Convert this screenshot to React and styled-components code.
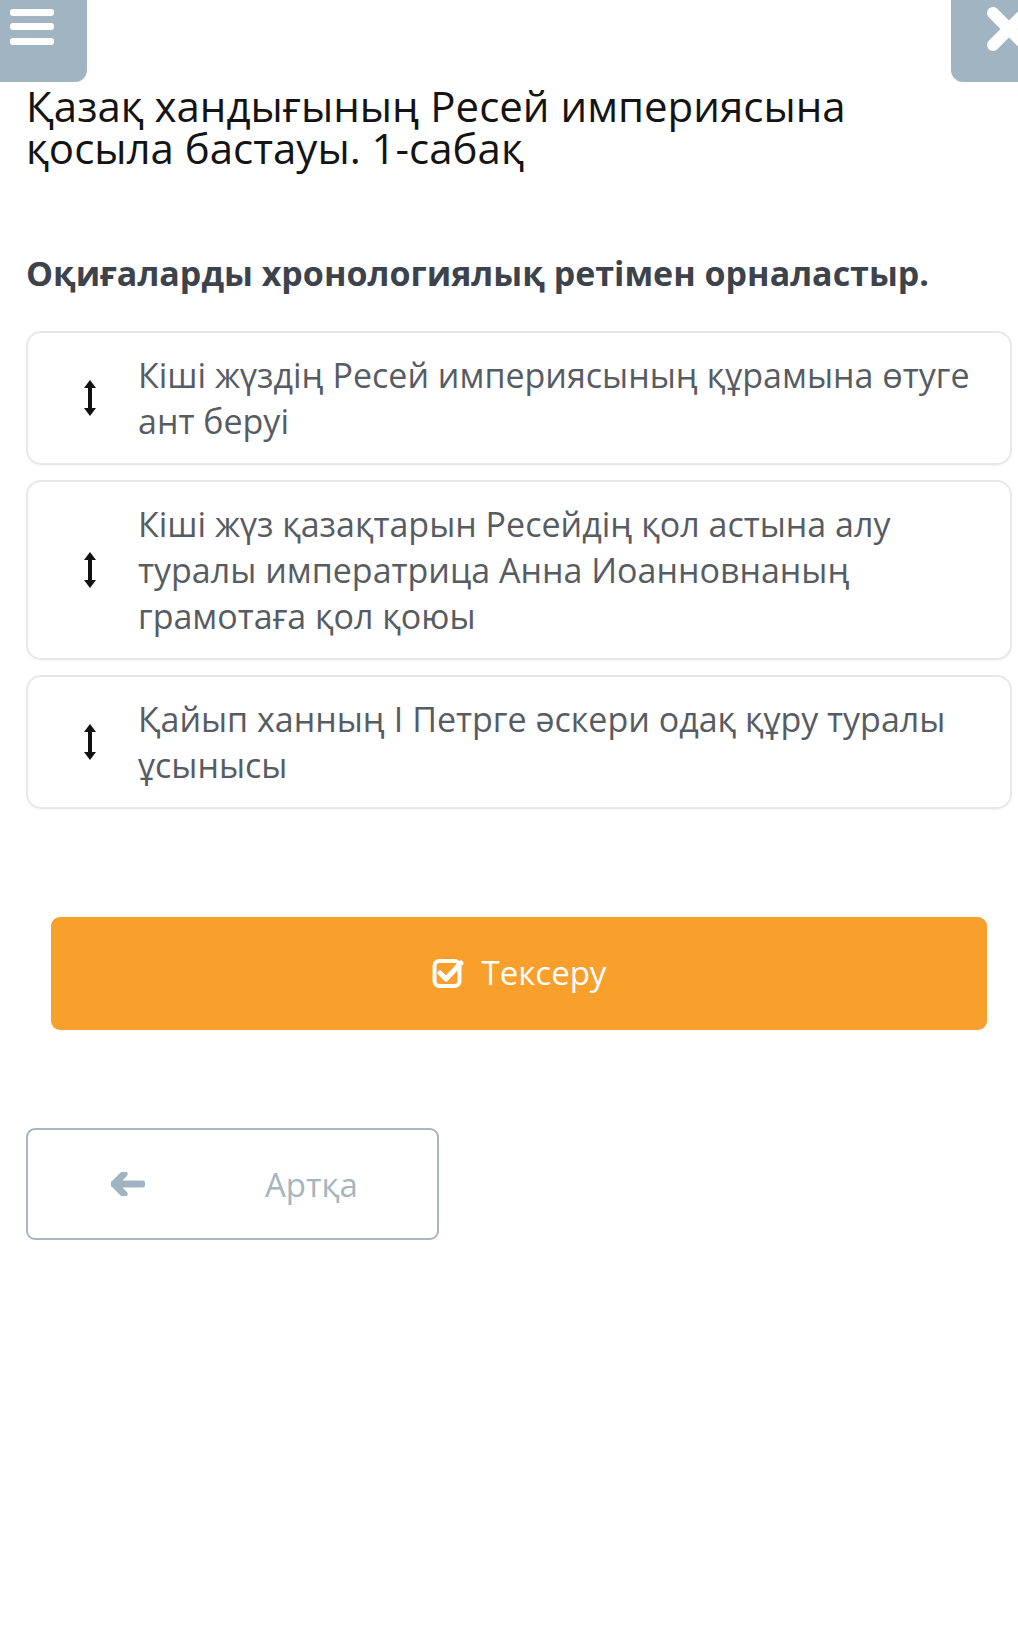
import React from 'react';
import styled, { createGlobalStyle } from 'styled-components';

const GlobalStyle = createGlobalStyle`
    html, body {
        margin: 0;
        padding: 0;
        background: #ffffff;
        overflow-x: hidden;
    }
    body {
        font-family: "Open Sans", "Noto Sans", sans-serif;
    }
`;

const Page = styled.div`
    width: 1018px;
    min-height: 1635px;
    overflow: hidden;
`;

const TopBar = styled.div`
    display: flex;
    justify-content: space-between;
    height: 82px;
`;

const CornerBtn = styled.button`
    /* верхние серые кнопки */
    width: 87px;
    height: 82px;
    border: none;
    padding: 0;
    background: #a0b4c2;
    display: flex;
    align-items: flex-start;
    border-radius: ${props => props.right ? "0 0 0 12px" : "0 0 12px 0"};
    margin-right: ${props => props.right ? "-20px" : "0"};
    flex-shrink: 0;
`;

const Content = styled.div`
    padding: 3px 6px 0 26px;
`;

const Title = styled.h1`
    margin: 0;
    max-width: 900px;
    font-size: 42px;
    font-weight: 400;
    line-height: 42px;
    color: #141414;
`;

const Question = styled.h2`
    margin: 84px 0 0;
    font-size: 34px;
    font-weight: 700;
    line-height: 40px;
    color: #3d434d;
`;

const SortList = styled.ul`
    list-style: none;
    margin: 38px 0 0;
    padding: 0;
    display: flex;
    flex-direction: column;
    gap: 15px;
`;

const SortItem = styled.li`
    display: flex;
    align-items: center;
    border: 2px solid #e6e8ea;
    border-radius: 15px;
    padding: 19px 20px 19px 0;
    box-shadow: 0 1px 2px rgba(0, 0, 0, 0.04);
`;

const Handle = styled.div`
    width: 110px;
    flex-shrink: 0;
    display: flex;
    justify-content: center;
    padding-left: 14px;
    box-sizing: border-box;
`;

const ItemText = styled.p`
    margin: 0;
    font-size: 34px;
    line-height: 46px;
    color: #575c63;
`;

const CheckBtn = styled.button`
    display: flex;
    align-items: center;
    justify-content: center;
    gap: 18px;
    width: 936px;
    height: 113px;
    margin: 108px 0 0 25px;
    border: none;
    border-radius: 9px;
    background: #f99f2c;
    color: #ffffff;
    font-family: "Open Sans", sans-serif;
    font-size: 33px;
    padding: 0 0 2px;
`;

const BackBtn = styled.button`
    display: flex;
    align-items: center;
    width: 413px;
    height: 112px;
    margin-top: 98px;
    border: 2px solid #a9b6be;
    border-radius: 9px;
    background: #ffffff;
    color: #a6b5be;
    font-family: "Open Sans", sans-serif;
    font-size: 33px;
    padding: 0 0 0 83px;
    box-sizing: border-box;
    gap: 120px;
`;

const MenuIcon = () => (
    <svg width="87" height="82" viewBox="0 0 87 82">
        <rect x="10" y="9" width="44" height="7" rx="3" fill="#fff" />
        <rect x="10" y="23" width="44" height="7" rx="3" fill="#fff" />
        <rect x="10" y="38" width="44" height="7" rx="3" fill="#fff" />
    </svg>
);

const CloseIcon = () => (
    <svg width="87" height="82" viewBox="0 0 87 82">
        <path d="M42 13 L74 45 M74 13 L42 45" stroke="#fff" strokeWidth="12" strokeLinecap="round" />
    </svg>
);

const ArrowsV = () => (
    <svg width="12" height="36" viewBox="0 0 12 36">
        <path d="M6 0 L12 8 L8 8 L8 28 L12 28 L6 36 L0 28 L4 28 L4 8 L0 8 Z" fill="#111" />
    </svg>
);

const CheckSquare = () => (
    <svg width="32" height="30" viewBox="0 0 32 30">
        <rect x="2.5" y="3" width="25" height="25" rx="5" fill="none" stroke="#fff" strokeWidth="4" />
        <path d="M8 15 L14 21 L29 5" fill="none" stroke="#fff" strokeWidth="5" strokeLinecap="round" strokeLinejoin="round" />
    </svg>
);

const ArrowLeft = () => (
    <svg width="34" height="24" viewBox="0 0 34 24">
        <path d="M3 12 L13 2 M3 12 L13 22 M3 12 L31 12" fill="none" stroke="#9fb3c1" strokeWidth="7" strokeLinecap="round" strokeLinejoin="round" />
    </svg>
);

const items = [
    "Кіші жүздің Ресей империясының құрамына өтуге ант беруі",
    "Кіші жүз қазақтарын Ресейдің қол астына алу туралы императрица Анна Иоанновнаның грамотаға қол қоюы",
    "Қайып ханның І Петрге әскери одақ құру туралы ұсынысы",
];

function App() {
    return (
        <>
            <GlobalStyle />
            <Page>
                <TopBar>
                    <CornerBtn><MenuIcon /></CornerBtn>
                    <CornerBtn right><CloseIcon /></CornerBtn>
                </TopBar>
                <Content>
                    <Title>Қазақ хандығының Ресей империясына қосыла бастауы. 1-сабақ</Title>
                    <Question>Оқиғаларды хронологиялық ретімен орналастыр.</Question>

                    <SortList>
                        {items.map((text) => (
                            <SortItem key={text}>
                                <Handle><ArrowsV /></Handle>
                                <ItemText>{text}</ItemText>
                            </SortItem>
                        ))}
                    </SortList>

                    <CheckBtn>
                        <CheckSquare />
                        <span>Тексеру</span>
                    </CheckBtn>

                    <BackBtn>
                        <ArrowLeft />
                        <span>Артқа</span>
                    </BackBtn>
                </Content>
            </Page>
        </>
    );
}

export default App;
